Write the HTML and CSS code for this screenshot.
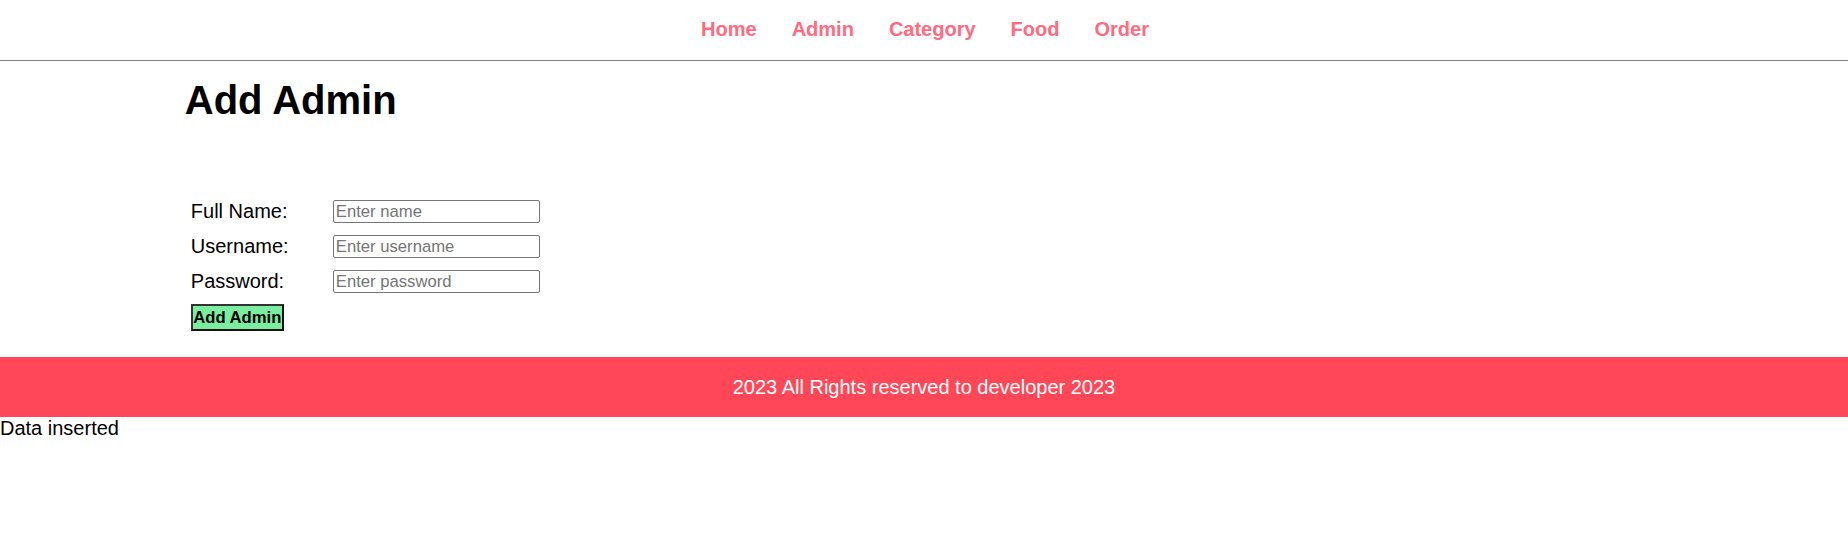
FILE: index.html
```html
<!DOCTYPE html>
<html lang="en">
<head>
<meta charset="utf-8">
<title>Add Admin</title>
<link rel="stylesheet" href="styles.css">
</head>
<body>
<header class="site-header">
  <nav class="nav">
    <a class="nav-link" href="#">Home</a>
    <a class="nav-link" href="#">Admin</a>
    <a class="nav-link" href="#">Category</a>
    <a class="nav-link" href="#">Food</a>
    <a class="nav-link" href="#">Order</a>
  </nav>
</header>
<main class="wrapper">
  <h1 class="page-title">Add Admin</h1>
  <form class="admin-form">
    <div class="form-grid">
      <label class="form-label">Full Name:</label>
      <input class="form-input" type="text" placeholder="Enter name">
      <label class="form-label">Username:</label>
      <input class="form-input" type="text" placeholder="Enter username">
      <label class="form-label">Password:</label>
      <input class="form-input" type="password" placeholder="Enter password">
    </div>
    <button class="submit-btn" type="button">Add Admin</button>
  </form>
</main>
<footer class="site-footer">
  <p class="footer-text">2023 All Rights reserved to developer 2023</p>
</footer>
<div class="status">Data inserted</div>
</body>
</html>
```

FILE: styles.css
```css
* { box-sizing: border-box; }

body {
  margin: 0;
  font-family: "Liberation Sans", Arial, sans-serif;
  font-size: 20px;
  line-height: 23px;
  color: #000;
  background: #fff;
}

.site-header {
  height: 61px;
  border-bottom: 1px solid #808080;
  padding-top: 18px;
}

.nav {
  display: flex;
  justify-content: center;
  gap: 35px;
  padding-left: 2px;
}

.nav-link {
  color: #ff6b81;
  font-weight: bold;
  font-size: 20px;
  line-height: 23px;
  text-decoration: none;
}

.wrapper {
  width: 80%;
  margin: 0 auto;
}

.page-title {
  margin: 16px 0 0;
  font-size: 40px;
  line-height: 46px;
  font-weight: bold;
}

.admin-form {
  margin-top: 77px;
  padding-left: 6px;
}

.form-grid {
  display: grid;
  grid-template-columns: 142px 207px;
  grid-auto-rows: 23px;
  row-gap: 12px;
  align-items: center;
}

.form-label {
  font-size: 20px;
  line-height: 23px;
}

.form-input {
  width: 207px;
  height: 23px;
  margin: 0;
  padding: 1px 2px;
  border: 1px solid #767676;
  border-radius: 2px;
  font-family: "Liberation Sans", Arial, sans-serif;
  font-size: 16.67px;
  color: #000;
}

.form-input::placeholder {
  color: #757575;
}

.submit-btn {
  display: block;
  margin-top: 11px;
  width: 93px;
  height: 27px;
  padding: 0;
  background: #7bed9f;
  border: 2px solid #333;
  border-right-color: #111;
  border-bottom-color: #111;
  font-family: "Liberation Sans", Arial, sans-serif;
  font-size: 16.67px;
  font-weight: bold;
  color: #000;
  line-height: 19px;
  white-space: nowrap;
  text-align: center;
}

.site-footer {
  margin-top: 26px;
  height: 60px;
  background: #ff4757;
  display: flex;
  align-items: center;
  justify-content: center;
}

.footer-text {
  margin: 0;
  color: #fff;
  font-size: 20px;
  line-height: 23px;
}

.status {
  font-size: 20px;
  line-height: 23px;
}
```
